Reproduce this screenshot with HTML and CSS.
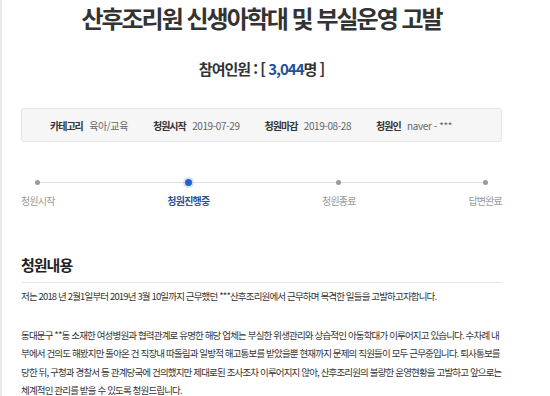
FILE: index.html
```html
<!DOCTYPE html>
<html lang="ko">

<head>
  <meta charset="UTF-8">
  <meta name="viewport" content="width=device-width, initial-scale=1.0">
  <title>산후조리원 신생아학대 및 부실운영 고발</title>
  <link rel="stylesheet" href="styles.css">
</head>

<body>
  <div class="page">
    <div class="petition">
      <h1 class="petition__title">산후조리원 신생아학대 및 부실운영 고발</h1>
      <div class="petition__count">참여인원 : [ <span>3,044</span>명 ]</div>

      <ul class="petition__info">
        <li><b>카테고리</b> 육아/교육</li>
        <li><b>청원시작</b> 2019-07-29</li>
        <li><b>청원마감</b> 2019-08-28</li>
        <li><b>청원인</b> naver - ***</li>
      </ul>

      <ol class="steps">
        <li class="steps__item"><i></i>청원시작</li>
        <li class="steps__item steps__item--on"><i></i>청원진행중</li>
        <li class="steps__item"><i></i>청원종료</li>
        <li class="steps__item"><i></i>답변완료</li>
      </ol>

      <h2 class="petition__head">청원내용</h2>
      <div class="petition__text">
        <p>저는 2018 년 2월1일부터 2019년 3월 10일까지 근무했던 ***산후조리원에서 근무하며 목격한 일들을 고발하고자합니다.</p>
        <p>동대문구 **동 소재한 여성병원과 협력관계로 유명한 해당 업체는 부실한 위생관리와 상습적인 아동학대가 이루어지고 있습니다. 수차례 내부에서 건의도 해봤지만 돌아온 건 직장내 따돌림과 일방적 해고통보를 받았을뿐 현재까지 문제의 직원들이 모두 근무중입니다. 퇴사통보를 당한 뒤, 구청과 경찰서 등 관계당국에 건의했지만 제대로된 조사조차 이루어지지 않아, 산후조리원의 불량한 운영현황을 고발하고 앞으로는 체계적인 관리를 받을 수 있도록 청원드립니다.</p>
      </div>
    </div>
  </div>
</body>

</html>
```

FILE: styles.css
```css
* {
  padding: 0;
  margin: 0;
  border: 0;
  box-sizing: border-box;
}

ul li,
ol li {
  list-style: none;
}

h1,
h2 {
  font-size: inherit;
  font-weight: 400;
}

/*--------------------*/
body {
  background: #fff;
  color: #333;
  font-family: "Noto Sans CJK KR", "Noto Sans", sans-serif;
}

.page {
  min-height: 100vh;
  border-left: 2px solid #e9e9e9;
}

.petition {
  width: 481px;
  margin-left: 19px;
}

.petition__title {
  padding-top: 3px;
  font-size: 24px;
  line-height: 30px;
  font-weight: 700;
  letter-spacing: -2px;
  text-align: center;
  color: #333;
}

.petition__count {
  margin-top: 26px;
  font-size: 15px;
  line-height: 20px;
  font-weight: 700;
  letter-spacing: -1px;
  text-align: center;
  color: #333;
}

.petition__count span {
  color: #1e4f9c;
}

.petition__info {
  display: flex;
  align-items: center;
  gap: 25px;
  height: 34px;
  margin-top: 29px;
  padding-left: 28px;
  background: #f6f6f6;
  border: 1px solid #e6e6e6;
  border-radius: 3px;
  font-size: 10px;
  letter-spacing: -0.4px;
  color: #666;
}

.petition__info b {
  margin-right: 4px;
  font-weight: 700;
  letter-spacing: -1px;
  color: #333;
}

.steps {
  position: relative;
  display: flex;
  justify-content: space-between;
  margin-top: 35px;
  font-size: 10px;
  line-height: 16px;
  letter-spacing: -0.8px;
  color: #999;
}

.steps::before {
  content: '';
  position: absolute;
  top: 5px;
  left: 17px;
  right: 16px;
  height: 1px;
  background: #e2e2e2;
}

.steps__item {
  position: relative;
  display: flex;
  flex-direction: column;
  align-items: center;
}

.steps__item i {
  display: flex;
  align-items: center;
  justify-content: center;
  height: 11px;
  margin-bottom: 5px;
}

.steps__item i::after {
  content: '';
  width: 5px;
  height: 5px;
  border-radius: 50%;
  background: #999;
}

.steps__item--on {
  font-weight: 700;
  color: #2b5596;
}

.steps__item--on i::after {
  width: 7px;
  height: 7px;
  background: #1f62cc;
  box-shadow: 0 0 0 2px rgba(31, 98, 204, 0.18);
}

.petition__head {
  margin-top: 46px;
  padding-bottom: 7px;
  border-bottom: 1px solid #e6e6e6;
  font-size: 15px;
  line-height: 20px;
  font-weight: 700;
  letter-spacing: -1px;
  color: #222;
}

.petition__text {
  font-size: 9.5px;
  line-height: 18.5px;
  letter-spacing: -0.85px;
  color: #333;
}

.petition__text p {
  margin-top: 4px;
}

.petition__text p + p {
  margin-top: 20px;
}
```
